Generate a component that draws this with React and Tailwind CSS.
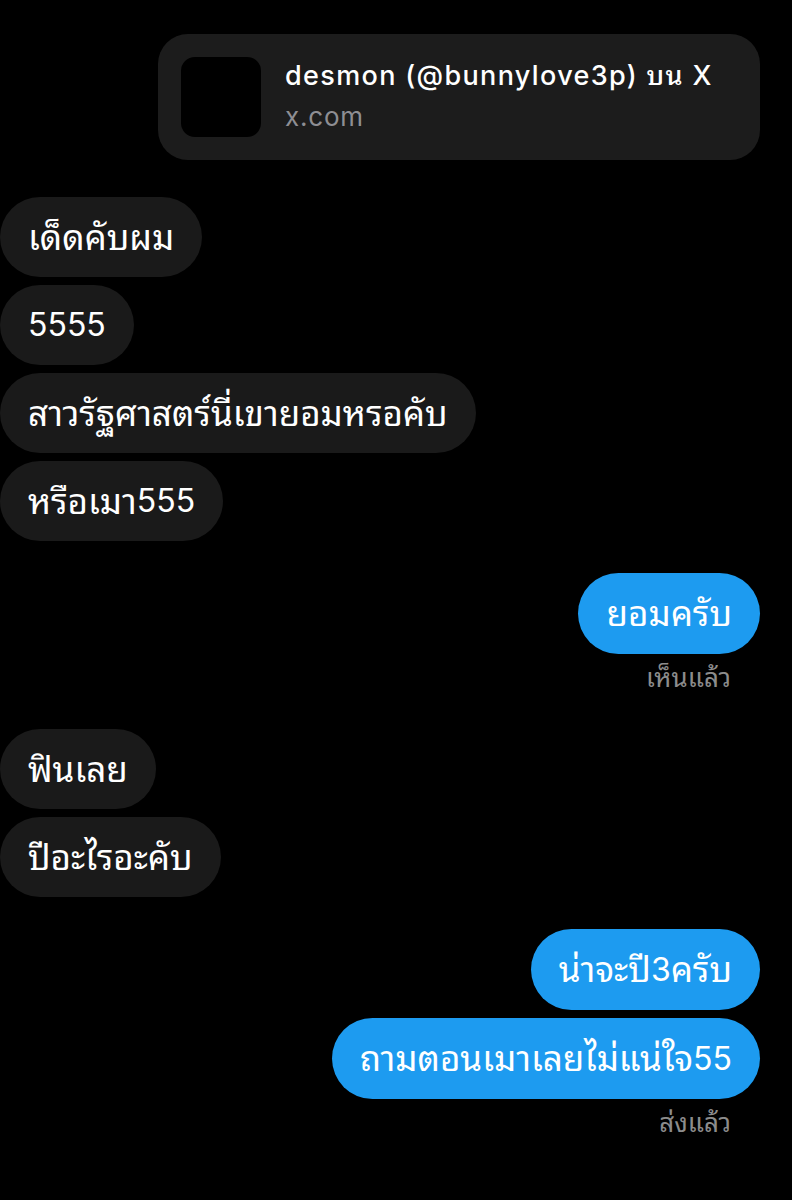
import React from "react";

const font = { fontFamily: 'Inter, "Noto Sans Thai Looped", "Noto Sans Thai", "Noto Sans", sans-serif' };

// Thai text sits a bit wider than the Latin digits in the source, so digits get their own size
const Num = ({ children }) => <span className="text-[32px]">{children}</span>;

const Left = ({ children }) => (
  <div className="flex">
    <div className="h-[80px] pl-[28px] pr-[28px] rounded-full bg-[#1a1a1a] flex items-center text-[35px] text-white">
      {children}
    </div>
  </div>
);

const Right = ({ children }) => (
  <div className="flex justify-end pr-[32px]">
    <div className="h-[81px] px-[28px] rounded-full bg-[#1d9bf0] flex items-center text-[35px] text-white">
      {children}
    </div>
  </div>
);

const Status = ({ children }) => (
  <div className="flex justify-end pr-[61px] mt-[8px] text-[26px] leading-[32px] text-[#8c8c8c]">
    {children}
  </div>
);

export default function App() {
  return (
    <div className="w-[792px] min-h-[1200px] bg-black pt-[34px]" style={font}>
      {/* link preview */}
      <div className="ml-[158px] mr-[32px] h-[126px] rounded-[30px] bg-[#1c1c1c] flex items-center pl-[23px] gap-[24px]">
        <div className="w-[80px] h-[80px] rounded-[14px] bg-black shrink-0"></div>
        <div className="flex flex-col">
          <span className="text-[27px] leading-[40px] font-medium tracking-[0.05em] text-white">
            desmon (@bunnylove3p) บน X
          </span>
          <span className="text-[26px] leading-[42px] tracking-[0.03em] text-[#8e8e93]">x.com</span>
        </div>
      </div>

      <div className="mt-[37px] flex flex-col gap-[8px]">
        <Left>เด็ดคับผม</Left>
        <Left><Num>5555</Num></Left>
        <Left>สาวรัฐศาสตร์นี่เขายอมหรอคับ</Left>
        <Left>หรือเมา<Num>555</Num></Left>
      </div>

      <div className="mt-[32px]">
        <Right>ยอมครับ</Right>
        <Status>เห็นแล้ว</Status>
      </div>

      <div className="mt-[35px] flex flex-col gap-[8px]">
        <Left>ฟินเลย</Left>
        <Left>ปีอะไรอะคับ</Left>
      </div>

      <div className="mt-[32px] flex flex-col gap-[8px]">
        <Right>น่าจะปี<Num>3</Num>ครับ</Right>
        <Right>ถามตอนเมาเลยไม่แน่ใจ<Num>55</Num></Right>
      </div>
      <Status>ส่งแล้ว</Status>
    </div>
  );
}
